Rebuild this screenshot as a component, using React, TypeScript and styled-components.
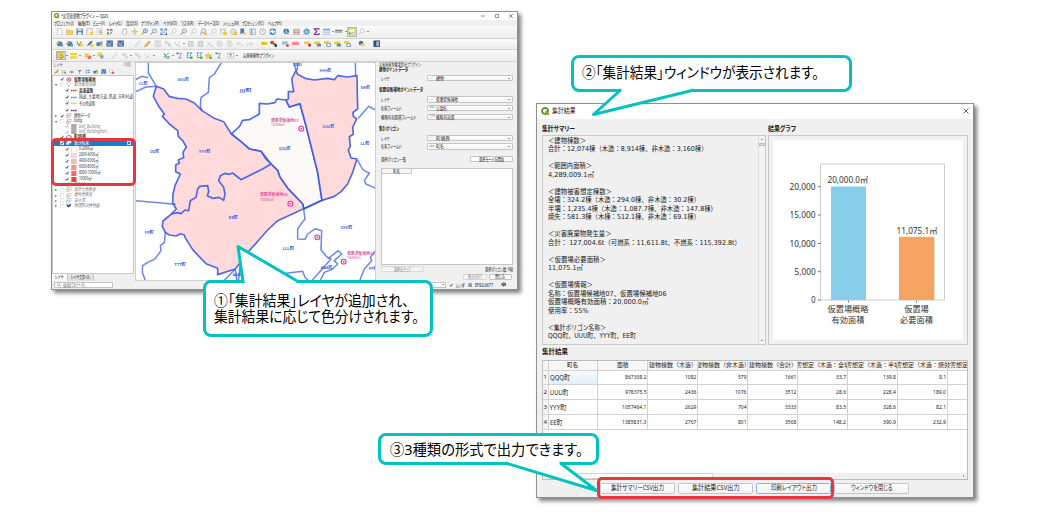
import React, { useLayoutEffect, useRef, useState } from "react";
import styled, { createGlobalStyle } from "styled-components";

const TEAL = "#00c3c1";
const RED = "#e6363f";

const Global = createGlobalStyle`
  html, body { margin: 0; padding: 0; background: #fff; }
  body { overflow: hidden; }
  * { box-sizing: border-box; }
  svg { display: block; }
`;

const Canvas = styled.main`
  position: relative;
  width: 1040px;
  height: 518px;
  overflow: hidden;
  background: #fff;
  color: #222;
  font-family: "Noto Sans", "Noto Sans CJK JP", sans-serif;
  font-size: 5.3px;
  line-height: 1;
`;

/* ---------- text condensed to a given width ---------- */

const TextBox = styled.span<{ $w: number; $size?: number; $bold?: boolean; $color?: string; $italic?: boolean; $font?: string; $full?: boolean; $lh?: number }>`
  display: inline-block;
  flex: none;
  width: ${(p) => p.$w}px;
  white-space: pre;
  font-size: ${(p) => (p.$size ? `${p.$size}px` : "inherit")};
  font-weight: ${(p) => (p.$bold ? 700 : "inherit")};
  font-style: ${(p) => (p.$italic ? "italic" : "inherit")};
  color: ${(p) => p.$color ?? "inherit"};
  font-family: ${(p) => p.$font ?? "inherit"};
  font-feature-settings: ${(p) => (p.$full ? "normal" : '"palt"')};
  line-height: ${(p) => p.$lh ?? 1.2};
`;
const TextInner = styled.span`
  display: inline-block;
  transform-origin: 0 50%;
`;

type TextProps = { w: number; size?: number; bold?: boolean; color?: string; italic?: boolean; font?: string; full?: boolean; lh?: number; children: string };

function Text({ w, size, bold, color, italic, font, full, lh, children }: TextProps) {
  const ref = useRef<HTMLSpanElement>(null);
  const [k, setK] = useState(1);
  useLayoutEffect(() => {
    if (ref.current && ref.current.offsetWidth) {
      const natural = parseFloat(getComputedStyle(ref.current).width);
      setK(w / natural);
    }
  }, [w, children]);
  return (
    <TextBox $w={w} $size={size} $bold={bold} $color={color} $italic={italic} $font={font} $full={full} $lh={lh}>
      <TextInner ref={ref} style={{ transform: `scaleX(${k})` }}>{children}</TextInner>
    </TextBox>
  );
}

const Window = styled.section<{ $x: number; $y: number; $w: number; $h: number }>`
  position: absolute;
  left: ${(p) => p.$x}px;
  top: ${(p) => p.$y}px;
  width: ${(p) => p.$w}px;
  height: ${(p) => p.$h}px;
  display: flex;
  flex-direction: column;
  background: #f0f0f0;
  border: 1px solid #8f8f8f;
  box-shadow: 3px 3px 4px rgba(0, 0, 0, 0.5);
`;

function QgisLogo({ size }: { size: number }) {
  return (
    <svg width={size} height={size} viewBox="0 0 16 16">
      <circle cx="7.6" cy="7.6" r="5.6" fill="none" stroke="#589632" strokeWidth="3.6" />
      <path d="M8 8h3.2l4.4 4.6v3h-3L8 11z" fill="#93b023" />
      <path d="M7.5 7.5h3l1.5 1.6-2.6 2.4-1.9-1.6z" fill="#ee7913" />
    </svg>
  );
}

/* ---------- toolbar icons ---------- */

const ICONS: Record<string, React.ReactNode> = {
  page: <path d="M3 1h7l3 3v11H3z" fill="#fff" stroke="#9a9a9a" />,
  folder: <path d="M1 4h5l1 2h8v8H1z" fill="#f9cf52" stroke="#e0ab2e" />,
  save: <><path d="M1 1h14v14H1z" fill="#6287b5" /><path d="M4 1h8v5H4zM4 9h8v6H4z" fill="#e4ecf5" /></>,
  layout: <><path d="M2 1h12v14H2z" fill="#fff" stroke="#999" /><path d="M4 1v14M2 4h12" stroke="#bbb" /><path d="M8 8h7v7H8z" fill="#f2cd3a" /></>,
  pageFind: <><path d="M2 1h11v13H2z" fill="#fff" stroke="#aaa" /><circle cx="9" cy="8" r="3" fill="#dce7f2" stroke="#666" /><path d="m11 10 4 4" stroke="#d9a520" strokeWidth="2" /></>,
  style: <><path d="M2 2h4v4H2z" fill="#d54b3d" /><path d="M9 2h5v4H9z" fill="#777" /><path d="M2 9h4v5H2z" fill="#5c9a3c" /><path d="m8 14 5-6" stroke="#555" strokeWidth="2" /></>,
  hand: <path d="M4 8V4h2V2h2v-.5h2V3h2v7l-2 5H6L3 10z" fill="#fff" stroke="#777" />,
  pan: <><path d="M8 1v14M1 8h14" stroke="#888" strokeWidth="1.4" /><circle cx="8" cy="8" r="3.4" fill="#f2cd3a" /></>,
  zoomIn: <><circle cx="9.5" cy="6" r="4.5" fill="#e1edf8" stroke="#4c7bb0" strokeWidth="1.6" /><path d="M6 9.5 1.5 14" stroke="#d99f29" strokeWidth="2.6" /><path d="M7.5 6h4M9.5 4v4" stroke="#3c6ea5" /></>,
  zoomOut: <><circle cx="9.5" cy="6" r="4.5" fill="#f4f7fb" stroke="#777" strokeWidth="1.3" /><path d="M6 9.5 1.5 14" stroke="#666" strokeWidth="2" /><path d="M7.5 6h4" stroke="#3c6ea5" /></>,
  zoomOff: <><circle cx="9" cy="6" r="4.5" fill="#f6f6f6" stroke="#bdbdbd" strokeWidth="1.3" /><path d="M6 9.5 1.5 14" stroke="#c4c4c4" strokeWidth="2" /></>,
  extent: <><path d="M1 1h5v2H3v3H1zM10 1h5v5h-2V3h-3zM1 10h2v3h3v2H1zM13 10h2v5h-5v-2h3z" fill="#3e6da3" /><circle cx="8" cy="8" r="3" fill="#dbe8f5" stroke="#3e6da3" /></>,
  zoomLast: <><circle cx="8" cy="6" r="4.5" fill="#e8eff7" stroke="#718daf" strokeWidth="1.3" /><path d="m4 9-3 5" stroke="#888" strokeWidth="2" /><path d="M8 10h7v5H8z" fill="#eebf43" /></>,
  newMap: <><path d="M1 2h10v9H1z" fill="#fff" stroke="#999" /><path d="M1 5h10" stroke="#999" /><path d="M7 8h8v7H7z" fill="#f0c542" /></>,
  globe: <><circle cx="7" cy="8" r="6" fill="#dfe7ef" stroke="#999" /><path d="M8 8h7v7H8z" fill="#eebf43" /></>,
  bookmark: <><path d="M3 1h8v13l-4-3-4 3z" fill="#4c7db6" /><circle cx="12" cy="12" r="3" fill="#f2cd3a" /></>,
  book: <><path d="M2 2h12v12H2z" fill="#e7edf4" stroke="#6a86a8" /><path d="M6 2v12" stroke="#6a86a8" strokeWidth="2" /></>,
  clock: <><circle cx="8" cy="8" r="6" fill="#fff" stroke="#888" strokeWidth="1.5" /><path d="M8 4v4l3 2" stroke="#777" fill="none" /></>,
  refresh: <path d="M2 7a6 6 0 0 1 11-2V2m0 3H9m5 4a6 6 0 0 1-11 2v3m0-3h4" fill="none" stroke="#2f7dc6" strokeWidth="2.4" />,
  info: <><circle cx="7" cy="7" r="6" fill="#3f77b5" /><path d="M7 3v2m0 1v5" stroke="#fff" strokeWidth="2" /><path d="M9 9l5 2-4 4z" fill="#aaa" /></>,
  abacus: <><path d="M1 2h14v12H1z" fill="#e9e2d8" stroke="#8f8f8f" /><path d="M2 6h12M2 10h12" stroke="#a55" strokeWidth="2" strokeDasharray="2 1" /></>,
  gear: <><circle cx="8" cy="8" r="4.5" fill="#a9c8ea" stroke="#5b93cf" strokeWidth="2.5" /><circle cx="8" cy="8" r="6.6" fill="none" stroke="#5b93cf" strokeWidth="2" strokeDasharray="2.6 2.5" /></>,
  sigma: <path d="M13 4V2H3l5 6-5 6h10v-3" fill="none" stroke="#8d1f93" strokeWidth="2.4" />,
  table: <><path d="M1 2h14v12H1z" fill="#f3f8fc" stroke="#87a7c7" /><path d="M1 3.5h14" stroke="#75a4d3" strokeWidth="3" /><path d="M6 2v12M11 2v12M1 9h14" stroke="#87a7c7" /></>,
  ruler: <><path d="M0 5h16v6H0z" fill="#b8b8b8" /><path d="M0 5h16" stroke="#666" strokeWidth="2" /></>,
  tip: <><path d="M2 1h13v9H8l-3 4v-4H2z" fill="#fbf3a2" stroke="#c4b24a" /><circle cx="4" cy="12" r="2.5" fill="#7ea64b" /></>,
  layers: <><path d="M1 8l5-6 8 3-3 7-6 2z" fill="#4b79aa" /><path d="M2 3h5v5H2z" fill="#e5b93c" /><path d="M9 8h6v6H9z" fill="#5b8fc4" /></>,
  vector: <><path d="m2 3 4 10 5-10" fill="none" stroke="#5f8f48" strokeWidth="2" /><path d="M9 8h6v6H9z" fill="#f0ca45" /></>,
  feather: <><path d="M2 14C4 7 8 3 14 1c0 6-5 10-9 11z" fill="#4c79ab" /><path d="M10 9h6v6h-6z" fill="#f0ca45" /></>,
  db: <><path d="M1 5h10v8H1z" fill="#4d7cb0" /><path d="M9 3h5v10H9z" fill="#7da2c8" /><path d="M8 9h6v5H8z" fill="#e9c350" /></>,
  raster: <><path d="M1 1h14v14H1z" fill="#466f9f" /><path d="m2 3 5 8 6-8M3 13h11" stroke="#d3e0ed" fill="none" strokeWidth="1.6" /></>,
  editOff: <path d="m2 14 2-5 8-8 3 3-8 8z" fill="#ececec" stroke="#bdbdbd" />,
  edit: <path d="m1 15 2-5 8-8 3 3-8 8z" fill="#eec43e" stroke="#a98522" />,
  saveOff: <path d="M2 2h12v12H2zM5 2h6v4H5zM5 9h6v5H5z" fill="#ededed" stroke="#c0c0c0" />,
  nodesOff: <path d="M2 4l5 5 6-6M3 3h3v3H3zM10 9h4v4h-4z" fill="#e4e4e4" stroke="#b8b8b8" />,
  vectorOff: <path d="m2 3 4 10 7-10M9 9l4 4" fill="none" stroke="#c2c2c2" strokeWidth="1.3" />,
  trashOff: <path d="M3 4h10v10H3zM2 3h12M6 6v6M10 6v6" fill="#e3e3e3" stroke="#b5b5b5" />,
  cutOff: <path d="m2 3 9 9M2 13l9-9M11 12h3v2h-3z" fill="none" stroke="#c0c0c0" strokeWidth="1.4" />,
  copyOff: <path d="M3 2h7v9H3zM6 5h7v9H6z" fill="#f5f5f5" stroke="#bdbdbd" />,
  undoOff: <path d="m6 4-4 4 4 4M2 8h8q4 0 4 5" fill="none" stroke="#c0c0c0" strokeWidth="1.5" />,
  redoOff: <path d="m10 4 4 4-4 4M14 8H6q-4 0-4 5" fill="none" stroke="#c0c0c0" strokeWidth="1.5" />,
  label: <><path d="M0 4h12l4 3-4 4H0z" fill="#f1d33f" /><path d="M2 7h8" stroke="#7c6a1b" strokeWidth="1.6" strokeDasharray="2 1" /></>,
  labelRGB: <><path d="M1 2h7v7H1z" fill="#d63b34" /><path d="M6 6h6v5H6z" fill="#4e9a3b" /><path d="M10 9h5v6h-5z" fill="#333" /></>,
  labelBlue: <><path d="M0 3h12v7H0z" fill="#9dbce0" /><circle cx="12" cy="12" r="3" fill="#c84545" /></>,
  labelRed: <path d="M0 4h15v7H0z" fill="#f08d92" />,
  labelPin: <><path d="M0 3h12v6H0z" fill="#efcf3c" /><circle cx="12" cy="11" r="3.5" fill="#b1503a" /></>,
  labelEye: <><path d="M0 3h13v6H0z" fill="#efcf3c" /><path d="M6 8h9v6H6z" fill="#6f87a2" /></>,
  labelMove: <><path d="M0 2h12v6H0z" fill="#efcf3c" /><path d="M6 8h8v6H6z" fill="#fff" stroke="#6e94bd" strokeWidth="2" /></>,
  python: <><path d="M2 4q5-5 9 0v4H6v3H2z" fill="#3a77aa" /><path d="M6 13q5 3 8-1V6h-3v3H6z" fill="#f7cf42" /></>,
  help: <><path d="M1 1h14v14H1z" fill="#2f4f78" /><path d="M7 3h6v10H7z" fill="#9fb6d3" /></>,
  select: <><path d="M1 1h12v12H1z" fill="#f3d335" stroke="#b59b1c" /><path d="m7 6 7 4-4 1-1 4z" fill="#fff" stroke="#555" /></>,
  rows: <path d="M1 2h14v5H1zM1 9h14v5H1z" fill="#efce38" />,
  deselect: <><path d="M1 3h9v9H1z" fill="#f0d041" /><path d="M8 8h7v7H8z" fill="#e45a45" /><path d="m9 9 5 5" stroke="#fff" /></>,
  selectLoc: <><path d="M1 1h10v9H1z" fill="#efd043" /><path d="M7 7h7v7H7z" fill="#88a4c4" /></>,
  nodeA: <><path d="m2 2 6 12M2 12 12 2" stroke="#356db0" strokeWidth="1.8" /><path d="M9 9h5v5H9z" fill="#7cae55" /></>,
  nodeB: <><path d="M3 3h9l-6 10h7" fill="none" stroke="#777" strokeWidth="1.5" /><path d="M1 1h4v4H1z" fill="#4e87c5" /></>,
  nodeC: <><path d="M3 2h10l-4 5 4 5H3z" fill="none" stroke="#3d7bc0" strokeWidth="2" strokeDasharray="4 1" /><path d="M9 10h5v5H9z" fill="#72a64c" /></>,
  star: <><path d="m7 1 2 5 5 .5-4 3 1 5-4-3-4 3 1-5-4-3L5 6z" fill="#f4d25a" stroke="#d8a62f" /><path d="M10 10h5v5h-5z" fill="#72a64c" /></>,
  textBox: <><path d="M1 2h14v11H1z" fill="#f7f7f7" stroke="#777" strokeDasharray="2 1" /><path d="M5 5h6M8 5v6" stroke="#555" strokeWidth="1.4" /></>,
  brush: <path d="M2 13c1-5 4-4 9-11l3 2c-5 8-6 9-12 9z" fill="#e3ad2f" stroke="#a06d29" />,
  eye: <><path d="M1 9q7-7 14 0-7 6-14 0z" fill="#e1e8f0" stroke="#666" /><circle cx="8" cy="9" r="2.5" fill="#4a77aa" /></>,
  filter: <path d="M2 3h12L9 9v5H7V9z" fill="#6a8fb8" />,
  groupAdd: <><path d="M3 4h9v8H3z" fill="#e6e6e6" stroke="#888" /><path d="M10 9h5v5h-5z" fill="#72a64c" /></>,
  expand: <><path d="M3 1v13M3 4h8M3 10h8" stroke="#777" strokeWidth="1.4" /><path d="M9 2h5v4H9zM9 8h5v4H9z" fill="#5b8fc4" /></>,
  remove: <><path d="M2 2h9v9H2z" fill="#fff" stroke="#999" /><path d="M8 8h7v6H8z" fill="#e0564a" /></>,
};

const IconSlot = styled.span<{ $gap?: number; $active?: boolean }>`
  flex: none;
  display: flex;
  align-items: center;
  justify-content: center;
  width: 9.9px;
  height: 9.5px;
  margin-left: ${(p) => p.$gap ?? 0}px;
  border: ${(p) => (p.$active ? "0.5px solid #b5b5b5" : "none")};
  background: ${(p) => (p.$active ? "#d8d8d8" : "transparent")};
`;
const Drop = styled.span`
  flex: none;
  width: 3px;
  height: 100%;
  display: flex;
  align-items: center;
  justify-content: center;
  &::after {
    content: "";
    border: 1px solid transparent;
    border-top-color: #333;
    margin-top: 1px;
  }
`;

function Icon({ name, size = 7.4 }: { name: string; size?: number }) {
  return <svg width={size} height={size} viewBox="0 0 16 16">{ICONS[name]}</svg>;
}

/* "name", ">" for a drop-down arrow, "+n" for a gap before the next icon, "!name" for a pressed tool */
function Tools({ spec }: { spec: string }) {
  let gap = 0;
  return (
    <>
      {spec.split(" ").map((s, i) => {
        if (s === ">") return <Drop key={i} />;
        if (s[0] === "+") { gap = parseFloat(s.slice(1)); return null; }
        const g = gap;
        gap = 0;
        const active = s[0] === "!";
        return <IconSlot key={i} $gap={g} $active={active}><Icon name={active ? s.slice(1) : s} /></IconSlot>;
      })}
    </>
  );
}

const MainTitle = styled.header`
  flex: none;
  display: flex;
  align-items: center;
  height: 7.5px;
  padding: 0 4px 0 2px;
  gap: 1.5px;
  background: #fff;
`;
const Spring = styled.span<{ $max?: number }>`
  flex: 1;
  max-width: ${(p) => (p.$max === undefined ? "none" : `${p.$max}px`)};
`;
const Controls = styled.span`display: flex; gap: 10px;`;
const MenuBar = styled.nav`
  flex: none;
  display: flex;
  align-items: center;
  gap: 4.1px;
  height: 6.5px;
  padding-left: 2px;
`;
const ToolBar = styled.div<{ $h: number; $pad?: number }>`
  flex: none;
  display: flex;
  align-items: center;
  height: ${(p) => p.$h}px;
  padding-left: ${(p) => p.$pad ?? 3.2}px;
  background: linear-gradient(#fafafa, #ededed);
  border-bottom: 0.6px solid #d2d2d2;
`;

const MENUS: [string, number][] = [
  ["プロジェクト(J)", 19.5], ["編集(E)", 11.6], ["ビュー(V)", 11.6], ["レイヤ(L)", 12.6], ["設定(S)", 11.6], ["プラグイン(P)", 17.7],
  ["ベクタ(O)", 13.8], ["ラスタ(R)", 12.4], ["データベース(D)", 21], ["メッシュ(M)", 15.8], ["プロセッシング(C)", 21.6], ["ヘルプ(H)", 13.4],
];

/* ---------- layer panel ---------- */

const MainBody = styled.div`flex: 1; min-height: 0; display: flex;`;
const LayerPanel = styled.aside`width: 82px; flex: none; display: flex; flex-direction: column;`;
const PanelHead = styled.div`
  display: flex; align-items: center; justify-content: space-between; height: 6.5px; padding: 0 3px 0 1.5px;
`;
const PanelTools = styled.div`display: flex; align-items: center; height: 7px; padding-left: 1.5px; gap: 2.6px;`;
const Tree = styled.div`
  flex: 1; min-height: 0; background: #fff; border: 0.5px solid #c9c9c9; padding-top: 1px; overflow: hidden;
`;
const TreeRow = styled.div<{ $h: number; $indent: number; $on?: boolean }>`
  display: flex;
  align-items: center;
  height: ${(p) => p.$h}px;
  padding-left: ${(p) => p.$indent}px;
  gap: 2.1px;
  color: ${(p) => (p.$on ? "#fff" : "#333")};
  background: ${(p) => (p.$on ? "#1a7bd2" : "transparent")};
`;
const Arrow = styled.span`width: 2.5px; font-size: 3.5px; flex: none; color: #555;`;
const Badge = styled.span`margin-left: auto; margin-right: 2px; width: 4.5px; height: 3.5px; border: 0.8px solid #cfe3f7;`;
const Mark = styled.svg`flex: none;`;

function Check({ on, size = 4.3, faint }: { on?: boolean; size?: number; faint?: boolean }) {
  return (
    <Mark width={size} height={size} viewBox="0 0 10 10">
      <rect x=".5" y=".5" width="9" height="9" fill="#fff" stroke={on ? "#ddd" : "#bbb"} />
      {on && <path d="m2 5 2.3 2.700L8 2" fill="none" stroke={faint ? "#999" : "#111"} strokeWidth="1.7" />}
    </Mark>
  );
}

type Sym = { kind: "box" | "dash" | "ring" | "vec" | "poly" | "group" | "wms"; color: string };
function Symbol({ kind, color }: Sym) {
  return (
    <Mark width="5.6" height="5.1" viewBox="0 0 11 10">
      {kind === "box" && <rect x=".5" y="0" width="10" height="10" fill={color} stroke="#c9a7a7" strokeWidth=".6" />}
      {kind === "dash" && <path d="M0 5h11" stroke={color} strokeWidth="2.8" strokeDasharray="3 1" />}
      {kind === "ring" && <><circle cx="5.5" cy="5" r="3.7" fill="#fff" stroke={color} strokeWidth="1.8" /><circle cx="5.5" cy="5" r="1.4" fill={color} /></>}
      {kind === "vec" && <path d="M1 1l4 8 5-8" fill="none" stroke={color} strokeWidth="1.2" />}
      {kind === "poly" && <path d="M1 3l4-2 5 1v5l-4-1-5 2z" fill="none" stroke={color} strokeWidth="1.5" />}
      {kind === "group" && <path d="M3 1h7v5H3zM1 4h5v5H1z" fill="#fff" stroke={color} />}
      {kind === "wms" && <path d="M1 1l4 3 4-3 1 4-5 4-3-2z" fill={color} />}
    </Mark>
  );
}

type Row = { h: number; ind: number; arrow?: string; on?: boolean; faint?: boolean; sym: Sym; t: string; w: number; b?: boolean; i?: boolean; sel?: boolean; c?: string };
const ROWS: Row[] = [
  { h: 5.2, ind: 2, arrow: "", on: true, sym: { kind: "ring", color: "#e0358c" }, t: "仮置場候補地", w: 21.5, b: true },
  { h: 5.2, ind: 2, arrow: "▾", sym: { kind: "vec", color: "#aaa" }, t: "緊急輸送道路", w: 22, i: true, c: "#888" },
  { h: 6.5, ind: 12, on: true, sym: { kind: "dash", color: "#e83232" }, t: "高速道路", w: 14, b: true },
  { h: 6.5, ind: 12, on: true, sym: { kind: "dash", color: "#17b88a" }, t: "国道、主要地方道、県道、市町村道", w: 54 },
  { h: 6.5, ind: 12, on: true, sym: { kind: "dash", color: "#efbb3a" }, t: "その他道路", w: 16 },
  { h: 6.5, ind: 12, on: true, sym: { kind: "dash", color: "#6b2c91" }, t: "", w: 1 },
  { h: 5.3, ind: 2, arrow: "▸", on: true, sym: { kind: "group", color: "#999" }, t: "建物データ", w: 16 },
  { h: 5.3, ind: 2, arrow: "▾", sym: { kind: "group", color: "#999" }, t: "bldg", w: 8 },
  { h: 5.3, ind: 12, on: true, faint: true, sym: { kind: "box", color: "#aaa" }, t: "bldf_Building", w: 21, i: true, c: "#888" },
  { h: 5.3, ind: 12, on: true, faint: true, sym: { kind: "box", color: "#aaa" }, t: "bldf_BuildingPart", w: 28, i: true, c: "#888" },
  { h: 5.3, ind: 2, arrow: "", on: true, sym: { kind: "poly", color: "#3355e8" }, t: "町境界", w: 12, b: true },
  { h: 6.2, ind: 2, arrow: "▾", on: true, sym: { kind: "group", color: "#cde" }, t: "集計結果", w: 15, sel: true },
  { h: 6, ind: 12, on: true, sym: { kind: "box", color: "#ffffff" }, t: "0-2000㎡", w: 14 },
  { h: 6, ind: 12, on: true, sym: { kind: "box", color: "#fdd9d9" }, t: "2000-4000㎡", w: 19.5 },
  { h: 6, ind: 12, on: true, sym: { kind: "box", color: "#fcb8b8" }, t: "4000-6000㎡", w: 19.5 },
  { h: 6, ind: 12, on: true, sym: { kind: "box", color: "#fa9090" }, t: "6000-8000㎡", w: 19.5 },
  { h: 6, ind: 12, on: true, sym: { kind: "box", color: "#f76a6a" }, t: "8000-10000㎡", w: 21.5 },
  { h: 6, ind: 12, on: true, sym: { kind: "box", color: "#f43c3c" }, t: "10000㎡-", w: 13.5 },
  { h: 5.3, ind: 2, arrow: "▸", sym: { kind: "group", color: "#bbb" }, t: "震度分布", w: 12, i: true, c: "#888" },
  { h: 5.3, ind: 2, arrow: "▸", sym: { kind: "group", color: "#aaa" }, t: "液状化危険度", w: 21.5, i: true, c: "#888" },
  { h: 5.3, ind: 2, arrow: "▸", sym: { kind: "group", color: "#aaa" }, t: "建物危険度", w: 18, i: true, c: "#888" },
  { h: 5.3, ind: 2, arrow: "▸", sym: { kind: "group", color: "#aaa" }, t: "浸水深", w: 11, i: true, c: "#888" },
  { h: 5.3, ind: 2, arrow: "▸", sym: { kind: "wms", color: "#27619b" }, t: "地理院淡色地図", w: 25.5, i: true, c: "#777" },
];

const Tabs = styled.div`flex: none; height: 6.5px; display: flex; align-items: stretch;`;
const Tab = styled.span<{ $on?: boolean }>`
  display: flex; align-items: center; padding: 0 3px;
  background: ${(p) => (p.$on ? "#fbfbfb" : "#e2e2e2")};
  border-right: 0.5px solid #c4c4c4;
`;

/* ---------- map ---------- */

const MapPane = styled.div`width: 241px; flex: none; background: #fff; border: 0.6px solid #cfcfcf; margin-left: 1px; overflow: hidden;`;

const LABELS: [string, number, number][] = [
  ["CC町", 27, 72], ["GGG町", 146, 62], ["JJJ町", 334, 95], ["HHH町", 573, 34], ["MM町", 693, 86], ["UUU町", 582, 202], ["LL町", 692, 254],
  ["QQQ町", 451, 268], ["DD町", 61, 276], ["YYY町", 211, 276], ["EE町", 297, 476], ["FF町", 45, 519], ["TTT町", 137, 617], ["LLL町", 462, 569],
  ["XXX町", 636, 505], ["AAA町", 577, 626], ["PP町", 717, 628], ["II町", 490, 17], ["AAA町", 312, 646],
];
const SITES: [string, number, number, number, number][] = [
  ["仮置場候補地07", 410, 183, 501, 209], ["仮置場候補地06", 377, 407, 468, 434], ["", 0, 0, 549, 535], ["仮置場候補地02", 638, 582, 628, 608],
];

function TownMap() {
  return (
    <svg width="240" height="219.5" viewBox="5 12 720 658.5">
      <g stroke="#3152e0" strokeOpacity=".85" strokeWidth="5" strokeLinejoin="round" fill="none">
        <path fill="#fdf9f9" d="M291 225 315 203 325 184 345 182 375 165 375 133 398 135 422 131 427 120 455 123 465 144 497 134 515 200 550 340 563 424 508 449 505 435 460 388 437 355 430 335 410 315 380 277 345 270z" />
        <path fill="#ffdada" d="M485 34 490 46 512 58 540 63 580 58 600 62 610 50 640 54 668 50 670 150 656 160 657 172 667 180 655 205 657 226 645 233 648 262 642 272 650 297 668 300 655 340 640 375 620 398 600 412 563 424 550 340 515 200 497 134 465 144 455 123 462 120 462 98 478 98 472 60z" />
        <path fill="#ffdada" d="M66 82 88 90 104 112 130 118 155 120 180 132 203 155 240 178 268 188 291 225 320 248 345 270 380 277 395 300 410 315 430 335 437 355 460 388 505 435 508 449 430 485 400 513 345 575 303 630 250 647 250 628 215 614 175 572 152 535 150 528 138 524 125 531 105 528 93 520 84 502 86 486 110 466 126 450 115 432 116 405 122 380 138 345 124 338 124 318 135 313 132 302 148 296 146 280 156 264 145 245 132 232 130 215 105 195 84 172 90 165 72 140 57 112z" />
        <path d="M110 465 130 461 140 464 152 453 163 455 168 425 185 415 190 390 196 382 220 380 223 398 219 410 235 418 255 415 268 424 272 405 268 385 253 365 258 350 272 343 285 346 295 342 320 362 385 330 410 315M563 424 508 450" />
        <path strokeWidth="4.5" strokeOpacity=".7" d="M42 10 42 42 66 82M4 62 22 52 42 56M4 98 35 84 66 82M262 10 240 45 225 56 222 100 200 115 198 140 203 155M478 10 485 34M490 10 489 34M663 10 664 50M724 152 717 150 703 142 672 178M670 303 684 330 695 338 705 342 690 365 695 375 724 388M4 425 124 436M93 520 90 550 78 560 80 575 62 600 40 610 25 620 24 640 35 670M508 450 512 480 500 495 490 510 490 540 512 541 520 525 543 509 562 515 560 572 576 592 590 600 555 640 530 668M580 600 605 580 612 575 622 585 600 605 610 615 595 630 570 640 555 670M724 575 708 595 712 605 690 630 675 668M455 643 505 637 512 655 525 668M303 630 266 668M303 632 308 668M318 610 312 668M405 615 412 624 445 645" />
      </g>
      <g fill="#2f55e6" fontSize="12.5" fontWeight="600" textAnchor="middle" fontFamily='"Noto Sans", "Noto Sans CJK JP", sans-serif'>
        {LABELS.map(([t, x, y], i) => <text key={i} x={x} y={y + 5} textLength={t.length > 3 ? 35 : 27} lengthAdjust="spacingAndGlyphs">{t}</text>)}
      </g>
      <g fill="#df3596" fontSize="12.5" fontFamily='"Noto Sans", "Noto Sans CJK JP", sans-serif'>
        {SITES.map(([t, x, y, cx, cy], i) => (
          <g key={i}>
            {t && <><text x={x} y={y + 5} fontWeight="500" textLength="83" lengthAdjust="spacingAndGlyphs">{t}</text>
              <text x={x} y={y + 19} textLength="42" lengthAdjust="spacingAndGlyphs">10000㎡</text></>}
            <circle cx={cx} cy={cy} r="7.2" fill="#fff" stroke="#df3596" strokeWidth="3.2" />
            <circle cx={cx} cy={cy} r="2.8" />
          </g>
        ))}
      </g>
    </svg>
  );
}

/* ---------- plugin panel ---------- */

const Plugin = styled.aside`
  flex: 1; min-width: 0; display: flex; flex-direction: column; padding: 0 3.5px 0 2.5px; font-size: 5.1px;
`;
const Line = styled.div<{ $h: number; $pad?: number }>`
  flex: none; display: flex; align-items: center; justify-content: space-between;
  height: ${(p) => p.$h}px; padding-left: ${(p) => p.$pad ?? 0}px;
`;
const Combo = styled.span`
  width: 86.5px; height: 6.5px; display: flex; align-items: center; gap: 2px; padding: 0 2px;
  background: linear-gradient(#fff, #f4f4f4); border: 0.6px solid #c6c6c6; border-radius: 1px;
  & > :last-child { margin-left: auto; }
`;
const Glyph = styled.span`width: 4.5px; font-size: 3.2px; color: #777; flex: none;`;
const SmallBtn = styled.span<{ $w: number; $off?: boolean }>`
  width: ${(p) => p.$w}px; height: 6px; display: flex; align-items: center; justify-content: center;
  background: ${(p) => (p.$off ? "#f4f4f4" : "#fcfcfc")}; border: 0.6px solid ${(p) => (p.$off ? "#dadada" : "#c4c4c4")};
  border-radius: 1px; color: ${(p) => (p.$off ? "#888" : "#222")};
`;
const ListBox = styled.div`flex: none; height: 97px; margin-left: 2px; background: #fff; border: 0.6px solid #c6c6c6;`;
const ListHead = styled.div`
  width: 30px; height: 5.8px; display: flex; align-items: center; justify-content: center; background: #f6f6f6;
  border-right: 0.5px solid #ccc; border-bottom: 0.5px solid #ccc;
`;
const Group = styled.div`display: flex; gap: 2.2px;`;

function Field({ label, w, glyph, value, vw, h }: { label: string; w: number; glyph: string; value: string; vw: number; h: number }) {
  return (
    <Line $h={h} $pad={2.5}>
      <Text w={w}>{label}</Text>
      <Combo><Glyph>{glyph}</Glyph><Text w={vw}>{value}</Text><Drop /></Combo>
    </Line>
  );
}

const StatusBar = styled.footer`
  flex: none; height: 8.5px; display: flex; align-items: center; padding: 0 10px 0 1.5px; gap: 3px; font-size: 5px;
`;
const Input = styled.span<{ $w: number }>`
  width: ${(p) => p.$w}px; height: 6.5px; display: flex; align-items: center; gap: 2px; padding-left: 2px;
  background: #fff; border: 0.6px solid #c4c4c4;
`;

/* ---------- result dialog ---------- */

const DlgTitle = styled.header`
  flex: none; height: 14.5px; display: flex; align-items: center; gap: 2.5px; padding: 0 4px 0 3.5px; background: #fff;
`;
const DlgBody = styled.div`flex: 1; min-height: 0; display: flex; flex-direction: column; padding: 4px 5px 0 5px;`;
const Split = styled.div`flex: none; display: flex; gap: 2.5px; height: 222.5px;`;
const Col = styled.div<{ $w: number }>`flex: none; width: ${(p) => p.$w}px; display: flex; flex-direction: column;`;
const Heading = styled.div<{ $h?: number }>`flex: none; height: ${(p) => p.$h ?? 12.5}px; display: flex; align-items: center;`;
const Frame = styled.div`flex: 1; min-height: 0; display: flex; border: 1px solid #c9c9c9; background: #f0f0f0;`;
const Summary = styled.div`flex: 1; padding: 0.5px 0 0 4.5px; font-size: 6.9px; color: #1c1c1c; overflow: hidden;`;
const SumLine = styled.div`height: 8.52px; display: flex; align-items: center;`;
const VScroll = styled.div`
  width: 7px; display: flex; flex-direction: column; align-items: center; border-left: 0.5px solid #ddd; padding: 2px 0; background: #f3f3f3;
`;
const Thumb = styled.span`width: 6px; height: 3px; margin-top: 3px; background: #dadada; border: 0.5px solid #c0c0c0;`;
const Tri = styled.span<{ $dir: "up" | "down" | "left" | "right" }>`
  width: 0; height: 0; border: 1.5px solid transparent; flex: none;
  ${(p) => ({ up: "border-bottom-color:#444;margin-top:-0.5px;", down: "border-top-color:#444;margin-top:auto;", left: "border-right-color:#444;", right: "border-left-color:#444;margin-left:auto;" })[p.$dir]}
`;
const Plot = styled.div`margin: 4px; background: #fff; flex: 1;`;

const SUMMARY: [string, number][] = [
  ["＜建物棟数＞", 38], ["合計：12,074棟（木造：8,914棟、非木造：3,160棟）", 159.5], ["", 1],
  ["＜範囲内面積＞", 44], ["4,289,009.1㎡", 46], ["", 1],
  ["＜建物被害想定棟数＞", 64], ["全壊：324.2棟（木造：294.0棟、非木造：30.2棟）", 152], ["半壊：1,235.4棟（木造：1,087.7棟、非木造：147.8棟）", 169],
  ["焼失：581.3棟（木棟：512.1棟、非木造：69.1棟）", 152], ["", 1],
  ["＜災害廃棄物発生量＞", 63.5], ["合計： 127,004.6t（可燃系：11,611.8t、不燃系：115,392.8t）", 193], ["", 1],
  ["＜仮置場必要面積＞", 58], ["11,075.1㎡", 35], ["", 1],
  ["＜仮置場情報＞", 45], ["名称：仮置場候補地07、仮置場候補地06", 118.5], ["仮置場概略有効面積：20,000.0㎡", 100.5], ["使用率：55%", 40.5], ["", 1],
  ["＜集計ポリゴン名称＞", 58], ["QQQ町、UUU町、YYY町、EE町", 88],
];

function Chart() {
  const ticks: [string, number, number][] = [["20,000", 187.2, 26], ["15,000", 215.5, 26], ["10,000", 244, 26], ["5,000", 272.2, 21], ["0", 300.5, 4.3]];
  return (
    <svg width="190" height="200" viewBox="773 140.500 190 200" fontFamily='"Noto Sans", "Noto Sans CJK JP", sans-serif' fontSize="8.2" fill="#333">
      <rect x="820.5" y="164.5" width="124" height="136" fill="#fff" stroke="#c6c6c6" strokeWidth=".9" />
      <rect x="831" y="187" width="35" height="113.500" fill="#87ceeb" />
      <rect x="899" y="237.3" width="35.3" height="63.2" fill="#f4a460" />
      {ticks.map(([t, y, w]) => (
        <g key={t}>
          <path d={`M818 ${y}h2.5`} stroke="#444" strokeWidth=".8" />
          <text x={815.6} y={y + 3} textAnchor="end" textLength={w} lengthAdjust="spacingAndGlyphs">{t}</text>
        </g>
      ))}
      <path d="M848.4 301v2M916.6 301v2" stroke="#444" strokeWidth=".8" />
      <g textAnchor="middle">
        <text x="847.8" y="183.7" textLength="40.5" lengthAdjust="spacingAndGlyphs">20,000.0㎡</text>
        <text x="917" y="234.2" textLength="41" lengthAdjust="spacingAndGlyphs">11,075.1㎡</text>
        <text x="848" y="312.3">仮置場概略</text>
        <text x="848" y="323">有効面積</text>
        <text x="916.5" y="312.3">仮置場</text>
        <text x="916.5" y="323">必要面積</text>
      </g>
    </svg>
  );
}

const Grid = styled.div`
  flex: none; width: 426px; height: 120px; display: flex; flex-direction: column; background: #fff; border: 0.8px solid #bdbdbd; overflow: hidden; font-size: 6px;
`;
const GridRow = styled.div<{ $head?: boolean }>`
  flex: none; display: flex; height: ${(p) => (p.$head ? 9.5 : 14.95)}px; background: ${(p) => (p.$head ? "#f6f6f6" : "#fff")};
`;
const Cell = styled.span<{ $w?: number; $align?: string; $head?: boolean; $sel?: boolean }>`
  flex: none; width: ${(p) => p.$w ?? 49.95}px; display: flex; align-items: center; justify-content: ${(p) => p.$align ?? "flex-end"};
  padding: 0 ${(p) => (p.$head ? 0 : 1)}px; overflow: hidden; white-space: nowrap;
  border-right: 0.8px solid #d2d2d2; border-bottom: 0.8px solid #d2d2d2;
  background: ${(p) => (p.$sel ? "linear-gradient(#f4fafe, #e2f0fa)" : p.$head ? "#f6f6f6" : "transparent")};
`;
const HScroll = styled.div`
  margin-top: auto; height: 6.5px; display: flex; align-items: center; padding: 0 2px; gap: 2px; background: #f0f0f0;
`;
const HThumb = styled.span`width: 164px; height: 5.5px; background: #fbfbfb; border: 0.5px solid #d2d2d2;`;
const ButtonRow = styled.div`display: flex; gap: 3px; padding: 2.5px 0 0 58px;`;
const Button = styled.span<{ $focus?: boolean }>`
  width: 75px; height: 11px; display: flex; align-items: center; justify-content: center; border-radius: 1.5px;
  background: linear-gradient(#fefefe, #f1f1f1);
  border: 1px solid ${(p) => (p.$focus ? "#7fb6e6" : "#c4c4c4")};
`;

const HEADS: [string, number][] = [
  ["町名", 11], ["面積", 11.5], ["建物棟数（木造）", 48], ["建物棟数（非木造）", 54], ["建物棟数（合計）", 48],
  ["被害想定（木造：全壊）", 66], ["被害想定（木造：半壊）", 66], ["被害想定（木造：焼失）", 66],
];
const DATA: [string, number, string[]][] = [
  ["QQQ町", 20, ["867338.2", "1082", "579", "1661", "33.7", "139.8", "8.1"]],
  ["UUU町", 18.5, ["978375.5", "2436", "1076", "3512", "28.6", "228.4", "189.0"]],
  ["YYY町", 17, ["1057464.1", "2629", "704", "3333", "83.5", "328.6", "82.1"]],
  ["EE町", 12.5, ["1385831.3", "2767", "801", "3568", "148.2", "390.9", "232.9"]],
];

/* ---------- annotations ---------- */

const Highlight = styled.div<{ $x: number; $y: number; $w: number; $h: number }>`
  position: absolute; left: ${(p) => p.$x}px; top: ${(p) => p.$y}px; width: ${(p) => p.$w}px; height: ${(p) => p.$h}px;
  border: 3px solid ${RED}; border-radius: 5px;
`;
const Bubble = styled.div<{ $x: number; $y: number; $w: number; $h: number; $pad: number }>`
  position: absolute; left: ${(p) => p.$x}px; top: ${(p) => p.$y}px; width: ${(p) => p.$w}px; height: ${(p) => p.$h}px;
  display: flex; flex-direction: column; justify-content: center; padding: 0 0 1px ${(p) => p.$pad}px;
  border: 3px solid ${TEAL}; border-radius: 8px; background: #fff; color: #000; font-size: 15px;
`;
const Tails = styled.svg`position: absolute; left: 0; top: 0; pointer-events: none;`;

export default function App() {
  return (
    <Canvas>
      <Global />
      <Window $x={51} $y={11} $w={466.5} $h={279}>
        <MainTitle>
          <QgisLogo size={5.5} />
          <Text w={47}>*災害廃棄物プラグイン — QGIS</Text>
          <Spring />
          <Controls>
            <svg width="4" height="4" viewBox="0 0 4 4"><path d="M0 2h4" stroke="#444" strokeWidth=".6" /></svg>
            <svg width="4" height="4" viewBox="0 0 4 4"><path d="M.4.4h3.2v3.200H.4z" fill="none" stroke="#444" strokeWidth=".6" /></svg>
            <svg width="4" height="4" viewBox="0 0 4 4"><path d="m.3.3 3.4 3.400m0-3.400L.3 3.700" stroke="#333" strokeWidth=".6" /></svg>
          </Controls>
        </MainTitle>
        <MenuBar>{MENUS.map(([t, w]) => <Text key={t} w={w} size={5}>{t}</Text>)}</MenuBar>
        <ToolBar $h={12.5}>
          <Tools spec="page folder save layout pageFind style +5 hand pan zoomIn zoomOut extent zoomOff zoomOut zoomOff zoomLast zoomOff newMap globe bookmark book clock refresh +4 info abacus gear sigma table > ruler > !tip zoomOff >" />
        </ToolBar>
        <ToolBar $h={11.5}>
          <Tools spec="layers layers vector feather db raster +1.7 raster +6.8 editOff edit saveOff nodesOff vectorOff > trashOff trashOff cutOff copyOff copyOff undoOff redoOff +4.7 label labelRGB +2 labelBlue labelRed +2 labelPin labelEye labelMove labelEye labelMove +4.8 python +4.4 help" />
        </ToolBar>
        <ToolBar $h={11.5} $pad={3.7}>
          <Tools spec="!select > rows > +1 deselect > selectLoc +4.8 editOff nodesOff > nodesOff vectorOff > +6 nodeA > nodeB nodeC nodeC star nodeB +2 textBox >" />
          <Spring $max={4.5} />
          <Text w={31} size={5}>災害廃棄物プラグイン</Text>
        </ToolBar>
        <MainBody>
          <LayerPanel>
            <PanelHead><Text w={8.5} color="#555">レイヤ</Text><Text w={7} size={4.5} color="#777">⊡⊠</Text></PanelHead>
            <PanelTools>
              {["brush", "groupAdd", "eye", "filter", "expand", "db", "raster", "remove"].map((n) => <Icon key={n} name={n} size={5.4} />)}
            </PanelTools>
            <Tree>
              {ROWS.map((r, i) => (
                <TreeRow key={i} $h={r.h} $indent={r.ind} $on={r.sel}>
                  {r.arrow !== undefined && <Arrow>{r.arrow}</Arrow>}
                  <Check on={r.on} faint={r.faint} />
                  <Symbol {...r.sym} />
                  <Text w={r.w} size={4.9} bold={r.b} italic={r.i} color={r.c}>{r.t}</Text>
                  {r.sel && <Badge />}
                </TreeRow>
              ))}
            </Tree>
            <Tabs>
              <Tab $on><Text w={8.5}>レイヤ</Text></Tab>
              <Tab><Text w={19}>レイヤスタイル</Text></Tab>
            </Tabs>
          </LayerPanel>
          <MapPane><TownMap /></MapPane>
          <Plugin>
            <Line $h={4.5}><Text w={42} color="#444">災害廃棄物重量算出プラグイン</Text></Line>
            <Line $h={6}><Text w={29} bold>建物ポイントデータ</Text></Line>
            <Field h={12} label="レイヤ" w={8.5} glyph="⋰" value="建物" vw={8} />
            <Line $h={11}><Text w={44} bold>仮置場候補地ポイントデータ</Text></Line>
            <Field h={8.5} label="レイヤ" w={8.5} glyph="⋰" value="仮置場候補地" vw={22} />
            <Field h={9} label="名称フィールド" w={20.5} glyph="abc" value="公園名" vw={11} />
            <Field h={9} label="概略有効面積フィールド" w={35} glyph="123" value="概略有効面" vw={18.5} />
            <Line $h={13}><Text w={20} bold>集計ポリゴン</Text></Line>
            <Field h={7} label="レイヤ" w={8.5} glyph="▱" value="町境界" vw={14} />
            <Field h={9.5} label="名称フィールド" w={20.5} glyph="abc" value="町名" vw={8} />
            <Line $h={16.5} $pad={2.5}><Text w={25}>選択ポリゴン一覧</Text><SmallBtn $w={43}><Text w={25}>選択モードを開始</Text></SmallBtn></Line>
            <ListBox><ListHead><Text w={7}>町名</Text></ListHead></ListBox>
            <Line $h={8.5} $pad={2.5}><SmallBtn $w={42.5} $off><Text w={17}>選択をクリア</Text></SmallBtn><Text w={28}>選択ポリゴン数：0個</Text></Line>
            <Line $h={7} $pad={84}><Group><SmallBtn $w={24} $off><Text w={14}>集計実行</Text></SmallBtn><SmallBtn $w={23.5}><Text w={10}>閉じる</Text></SmallBtn></Group></Line>
          </Plugin>
        </MainBody>
        <StatusBar>
          <Input $w={59}>
            <svg width="4" height="4" viewBox="0 0 8 8"><circle cx="3.5" cy="3.5" r="2.5" fill="none" stroke="#777" /><path d="m5.5 5.500 2 2" stroke="#777" /></svg>
            <Text w={22} color="#777">検索(Ctrl + K)</Text>
          </Input>
          <Spring />
          <Input $w={50}><Spring /><Text w={6}>0.0°</Text><Spring $max={14} /><Drop /></Input>
          <Check on /><Text w={8.5}>レンダ</Text>
          <svg width="4.5" height="4.5" viewBox="0 0 8 8"><circle cx="4" cy="4" r="3.3" fill="#ddd" stroke="#555" /><path d="M0 4h8M4 0v8" stroke="#555" strokeWidth=".8" /></svg>
          <Text w={18}>EPSG:6677</Text>
          <Spring $max={2} />
          <svg width="5.5" height="5" viewBox="0 0 11 10"><path d="M5.5 1q5 0 5 3.500t-4 3.500l-2 2V8Q.5 7.500.5 4.500T5.500 1z" fill="#555" /><path d="M3 4.500h5" stroke="#fff" /></svg>
        </StatusBar>
      </Window>

      <Window $x={536} $y={103} $w={438} $h={395}>
        <DlgTitle>
          <QgisLogo size={8.5} />
          <Text w={23.5} size={6.5}>集計結果</Text>
          <Spring />
          <svg width="6" height="6" viewBox="0 0 6 6"><path d="m.5.5 5 5m0-5-5 5" stroke="#444" strokeWidth=".8" /></svg>
        </DlgTitle>
        <DlgBody>
          <Split>
            <Col $w={223.5}>
              <Heading><Text w={33} size={6.8} bold>集計サマリー</Text></Heading>
              <Frame>
                <Summary>
                  {SUMMARY.map(([t, w], i) => <SumLine key={i}><Text full w={w} font='"DejaVu Sans", "Noto Sans CJK JP", sans-serif'>{t}</Text></SumLine>)}
                </Summary>
                <VScroll><Tri $dir="up" /><Thumb /><Tri $dir="down" /></VScroll>
              </Frame>
            </Col>
            <Col $w={200}>
              <Heading><Text w={28} size={6.8} bold>結果グラフ</Text></Heading>
              <Frame><Plot><Chart /></Plot></Frame>
            </Col>
          </Split>
          <Heading $h={15}><Text w={26} size={6.8} bold>集計結果</Text></Heading>
          <Grid>
            <GridRow $head>
              <Cell $w={5.5} $head />
              {HEADS.map(([t, w]) => <Cell key={t} $head $align="center"><Text full w={w} size={5.9}>{t}</Text></Cell>)}
              <Cell $w={21} $head $align="flex-end"><Text full w={24} size={5.9}>被害想定</Text></Cell>
            </GridRow>
            {DATA.map(([name, w, vals], i) => (
              <GridRow key={name}>
                <Cell $w={5.5} $head $align="center">{i + 1}</Cell>
                <Cell $align="flex-start" $sel={i === 0}><Text w={w} size={6.3}>{name}</Text></Cell>
                {vals.map((v, j) => <Cell key={j}><Text w={v.replace(".", "").length * 2.85 + (v.includes(".") ? 1.6 : 0)} size={5.8}>{v}</Text></Cell>)}
                <Cell $w={21} />
              </GridRow>
            ))}
            <HScroll><Tri $dir="left" /><HThumb /><Tri $dir="right" /></HScroll>
          </Grid>
          <ButtonRow>
            <Button><Text w={53} size={6.5}>集計サマリーCSV出力</Text></Button>
            <Button><Text w={47.5} size={6.5}>集計結果CSV出力</Text></Button>
            <Button $focus><Text w={46} size={6.5}>印刷レイアウト出力</Text></Button>
            <Button><Text w={41.5} size={6.5}>ウィンドウを閉じる</Text></Button>
          </ButtonRow>
        </DlgBody>
      </Window>

      <Highlight $x={50.5} $y={137.5} $w={85.5} $h={48.5} />
      <Highlight $x={596.5} $y={477} $w={237} $h={21.5} />

      <Bubble $x={203} $y={280} $w={230} $h={57} $pad={8}>
        <Text w={195} lh={1.1}>①「集計結果」レイヤが追加され、</Text>
        <Text w={205} lh={1.1}>集計結果に応じて色分けされます。</Text>
      </Bubble>
      <Bubble $x={571} $y={55} $w={281} $h={37} $pad={8}>
        <Text w={237} size={14.5}>②「集計結果」ウィンドウが表示されます。</Text>
      </Bubble>
      <Bubble $x={378} $y={433} $w={221} $h={32} $pad={9}>
        <Text w={193}>③3種類の形式で出力できます。</Text>
      </Bubble>
      <Tails width="1040" height="518" fill="#fff" stroke={TEAL} strokeWidth="3">
        <path d="M243 283.200V281.500L238 246.500 298 281.500V283.200" strokeLinejoin="round" />
        <path d="M620 88.800V90.500L593.500 114.500 692 90.500V88.800" strokeLinejoin="round" />
        <path d="M507 461.800V463.500L596.500 490.500 561 463.500V461.800" strokeLinejoin="round" />
      </Tails>
    </Canvas>
  );
}
